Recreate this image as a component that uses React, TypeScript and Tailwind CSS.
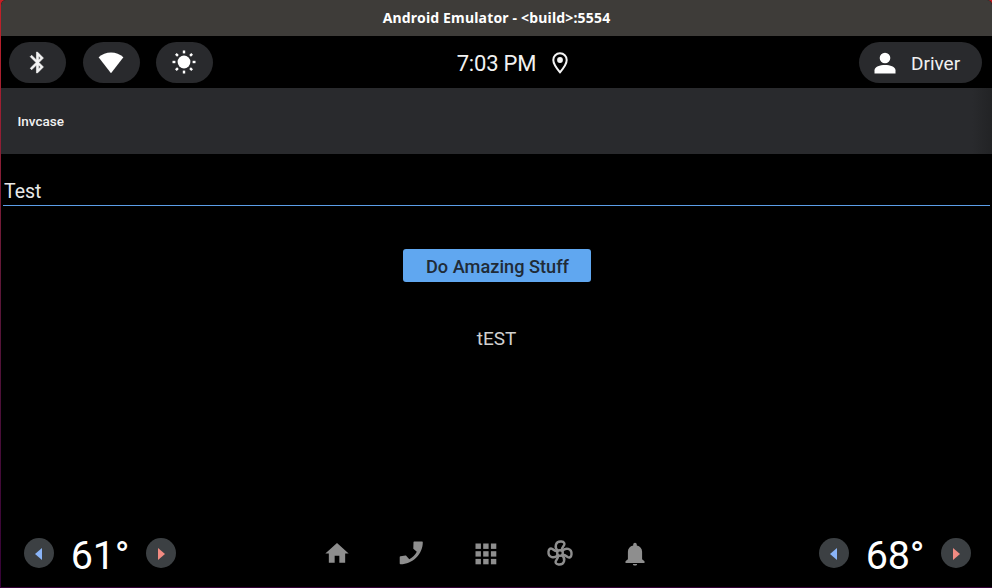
import type { ReactNode } from "react";

function StatusPill({ children }: { children: ReactNode }) {
  return (
    <button className="flex h-[41px] w-[57px] items-center justify-center rounded-full bg-[#292a2d]">
      {children}
    </button>
  );
}

function BluetoothIcon() {
  return (
    <svg viewBox="0 0 24 24" className="mr-px h-[25px] w-[25px]" fill="#f4f4f4" stroke="#f4f4f4" strokeWidth="0.6">
      <path d="M17.71 7.71 12 2h-1v7.59L6.41 5 5 6.41 10.59 12 5 17.59 6.41 19 11 14.41V22h1l5.71-5.71-4.3-4.29 4.3-4.29zM13 5.83l1.88 1.88L13 9.59V5.83zm1.88 10.46L13 18.17v-3.76l1.88 1.88z" />
    </svg>
  );
}

function WifiIcon() {
  return (
    <svg viewBox="0 0 26 22" className="mt-px mr-[1px] h-[22px] w-[26px]" fill="#fff">
      <path d="M.6 5.3C4 2.2 8.3.5 13 .5s9 1.7 12.4 4.800L13 21.200z" />
    </svg>
  );
}

const rays = [0, 45, 90, 135, 180, 225, 270, 315];

function BrightnessIcon() {
  return (
    <svg viewBox="-12 -12 24 24" className="mr-px h-6 w-6" fill="#fff">
      <circle r="6.400" />
      {rays.map((angle) => (
        <rect key={angle} x="-1.200" y="-11.500" width="2.400" height="2.900" transform={`rotate(${angle})`} />
      ))}
    </svg>
  );
}

function StatusBar() {
  return (
    <div className="grid h-[52px] grid-cols-[1fr_auto_1fr] items-center pr-[10px] pl-2">
      <div className="flex gap-[16.500px]">
        <StatusPill><BluetoothIcon /></StatusPill>
        <StatusPill><WifiIcon /></StatusPill>
        <StatusPill><BrightnessIcon /></StatusPill>
      </div>
      <div className="flex items-center gap-[16px] pl-[34px] text-[22px] leading-none tracking-[-0.200px] text-[#f1f1f1]">
        <span className="pt-[4px]">7:03 PM</span>
        <svg viewBox="0 0 16 22" className="mt-[2px] h-[22px] w-4">
          <path d="M8 1.300c-3.800 0-6.700 2.900-6.700 6.700C1.300 12.500 8 20.300 8 20.300s6.700-7.800 6.700-12.300C14.700 4.200 11.800 1.300 8 1.300z" fill="none" stroke="#f4f4f4" strokeWidth="2" />
          <circle cx="8" cy="8" r="2.900" fill="#f4f4f4" />
        </svg>
      </div>
      <button className="flex h-[41px] w-[123px] items-center gap-[15px] justify-self-end rounded-full bg-[#292a2d] pl-[15px] text-[19px] text-[#f1f1f1]">
        <svg viewBox="0 0 22 22" className="mt-px h-[22px] w-[22px]" fill="#fff">
          <circle cx="11" cy="6" r="5.300" />
          <path d="M.5 21.500v-3.200c0-3.400 5.500-5.200 10.500-5.200s10.500 1.800 10.500 5.200v3.200z" />
        </svg>
        <span className="pt-[4px]">Driver</span>
      </button>
    </div>
  );
}

function Temperature({ value }: { value: number }) {
  return (
    <div className="flex w-[152px] items-center justify-between">
      <button className="flex h-[30px] w-[30px] items-center justify-center rounded-full bg-[#3c4043]">
        <svg viewBox="0 0 7 12" className="mt-px mr-px h-3 w-[7px]" fill="#8ab4f8">
          <path d="M7 0v12L0 6z" />
        </svg>
      </button>
      <span className="pt-[6px] text-[39.500px] leading-none tracking-[-0.300px] text-white">{value}°</span>
      <button className="flex h-[30px] w-[30px] items-center justify-center rounded-full bg-[#3c4043]">
        <svg viewBox="0 0 7 12" className="mt-px ml-px h-3 w-[7px]" fill="#f28b82">
          <path d="M0 0v12l7-6z" />
        </svg>
      </button>
    </div>
  );
}

const materialIcons = {
  home: "M10 20v-6h4v6h5v-8h3L12 3 2 12h3v8z",
  bell: "M12 23.500c1.300 0 2.100-.5 2.100-1.500H9.900c0 1 .8 1.500 2.100 1.500zm7.100-6.300V9.800c0-3.200-2-5.500-5.300-6.200v-.9C13.800 1.400 13 .7 12 .7s-1.800.7-1.800 2v.9c-3.300.7-5.300 3-5.300 6.200v7.400l-2.400 2v1.900h19v-1.900z",
};

const petals = [0, 90, 180, 270];

function Dock() {
  return (
    <nav className="mr-[23.500px] flex items-center gap-[46.500px] text-[#8e8e8e]">
      <svg viewBox="0 0 24 24" className="h-[29px] w-7" fill="currentColor">
        <path d={materialIcons.home} />
      </svg>
      <svg viewBox="0 0 28 28" className="h-7 w-7" fill="currentColor">
        <path d="M17.200 2.500h7.900c.5 0 .7.300.7.800C25.800 15.500 15.500 25.300 3.600 25.300c-.6 0-.9-.3-.9-.8v-6.300c0-.5.300-.8.8-.9l5-.8c.4 0 .7.100.9.400l2.900 3.300c3.200-1.600 6-4.400 7.500-7.500l-3.200-2.600c-.3-.2-.4-.5-.3-.9l.2-6.100c0-.4.300-.6.700-.6z" />
      </svg>
      <svg viewBox="0 0 28 28" className="mt-px h-7 w-7" fill="currentColor">
        {[3.500, 11.200, 18.900].map((y) =>
          [3.500, 11.200, 18.900].map((x) => <rect key={`${x}-${y}`} x={x} y={y} width="5.400" height="5.400" />),
        )}
      </svg>
      <svg viewBox="-14 -14 28 28" className="h-7 w-7" fill="none" stroke="currentColor" strokeWidth="2.400">
        <circle r="2.800" />
        {petals.map((angle) => (
          <path
            key={angle}
            transform={`rotate(${angle})`}
            d="M-1.900-2.300C-4-3.900-4.700-6-4.100-8.200c.7-2.400 3-3.500 5.500-3.300 2.700.2 3.700 2 2.600 3.900C3.100-6.300 1.900-5.300 1.800-2.600"
          />
        ))}
      </svg>
      <svg viewBox="0 0 24 24" className="mt-px h-6 w-7" fill="currentColor">
        <path d={materialIcons.bell} />
      </svg>
    </nav>
  );
}

export default function App() {
  return (
    <div className="h-[588px] w-[992px] overflow-hidden bg-linear-to-b from-[#c52026] via-[#5c1739] to-[#360338] pb-px pl-px font-[Roboto,sans-serif]">
      <div className="flex h-full flex-col overflow-hidden rounded-t-[5px] bg-black">
        <header className="flex h-9 items-center justify-center bg-[#3e3c39] pb-[2px] text-[14px] font-bold text-white">
          <h1 className="font-['Noto_Sans',sans-serif] tracking-[0.180px]">Android Emulator - &lt;build&gt;:5554</h1>
        </header>
        <StatusBar />
        <div className="flex h-[66px] items-center bg-linear-to-r from-[#292a2d] from-98% to-[#222325] pl-[16.500px] text-[13.500px] font-medium text-[#f1f1f1]">
          Invcase
        </div>
        <main className="flex flex-1 flex-col items-center">
          <input
            className="mt-[23px] ml-[2px] h-[29px] w-[987px] self-start border-b border-[#5c9ee8] bg-transparent pt-[2px] pl-px text-[19.500px] text-[#e8e8e8] outline-none"
            defaultValue="Test"
          />
          <button className="mt-[43px] h-[33px] w-[188px] rounded-[3px] bg-[#60a7f0] pt-[3px] pl-[2px] text-[18.200px] font-medium text-[#202b37]">
            Do Amazing Stuff
          </button>
          <p className="mt-[43px] text-[19px] text-[#d0d0d0]">tEST</p>
        </main>
        <footer className="flex h-[68px] items-center justify-between pr-[21px] pl-[23px]">
          <Temperature value={61} />
          <Dock />
          <Temperature value={68} />
        </footer>
      </div>
    </div>
  );
}
